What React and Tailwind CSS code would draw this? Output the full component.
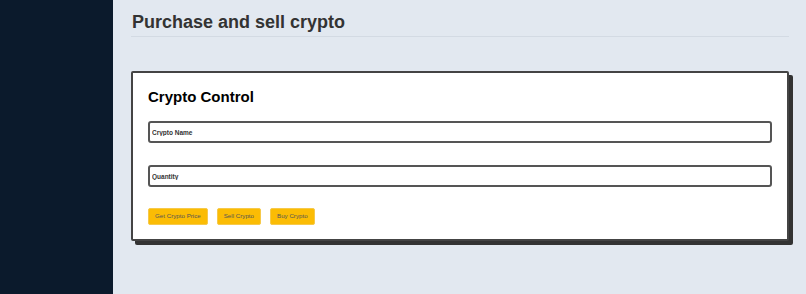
export default function App() {
  const buttons = ["Get Crypto Price", "Sell Crypto", "Buy Crypto"];

  return (
    <div className="flex min-h-[294px] font-['Liberation_Sans',Arial,sans-serif]">
      <aside className="w-[113px] shrink-0 bg-[#0b1a2c]" />

      <main className="flex-1 bg-[#e2e8f0] pl-[18px] pr-[17px] pt-[13px]">
        <h1 className="border-b border-[#d3dae3] pb-[4px] pl-px text-[18px] font-bold leading-[19px] text-[#333]">
          Purchase and sell crypto
        </h1>

        <section className="mt-[34px] rounded-[2px] border-2 border-[#444] bg-white px-[15px] pb-[14px] pt-[15px] shadow-[4px_4px_0_#333]">
          <h2 className="text-[15px] font-bold leading-[17px] text-black">Crypto Control</h2>

          <div className="mt-[16px] flex flex-col gap-[22px]">
            <input
              type="text"
              placeholder="Crypto Name"
              className="h-[22px] w-full rounded-[3px] border-2 border-[#555] px-[2px] text-[6.5px] font-bold text-[#333] placeholder:text-[#333] outline-none"
            />
            <input
              type="text"
              placeholder="Quantity"
              className="h-[22px] w-full rounded-[3px] border-2 border-[#555] px-[2px] text-[6.5px] font-bold text-[#333] placeholder:text-[#333] outline-none"
            />
          </div>

          <div className="mt-[21px] flex gap-[9px]">
            {buttons.map((label) => (
              <button
                key={label}
                type="button"
                className="h-[17px] rounded-[2px] border border-[#f6c94a] bg-[#fbbc04] px-[6px] text-[6.2px] leading-none text-[#555]"
              >
                {label}
              </button>
            ))}
          </div>
        </section>
      </main>
    </div>
  );
}
